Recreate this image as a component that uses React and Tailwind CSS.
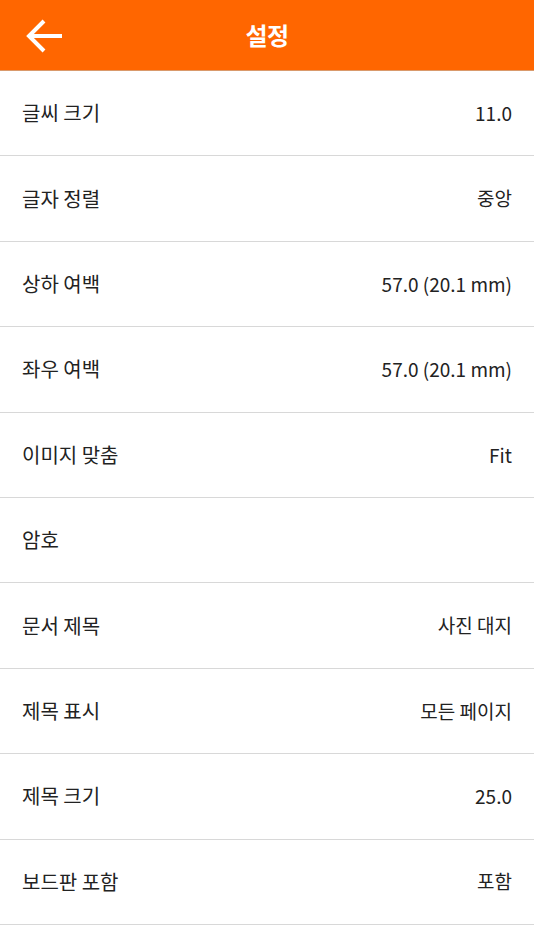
import { useState } from "react";

const settings = [
  { label: "글씨 크기", value: "11.0" },
  { label: "글자 정렬", value: "중앙" },
  { label: "상하 여백", value: "57.0 (20.1 mm)" },
  { label: "좌우 여백", value: "57.0 (20.1 mm)" },
  { label: "이미지 맞춤", value: "Fit" },
  { label: "암호", value: "" },
  { label: "문서 제목", value: "사진 대지" },
  { label: "제목 표시", value: "모든 페이지" },
  { label: "제목 크기", value: "25.0" },
  { label: "보드판 포함", value: "포함" },
];

const App = () => {
  const [items] = useState(settings);

  return (
    <div
      className="w-[534px] h-[950px] bg-white overflow-hidden"
      style={{ fontFamily: '"Noto Sans CJK KR", "Noto Sans", sans-serif' }}
    >
      {/* Header */}
      <div className="relative h-[71px] bg-[#ff6600] border-b border-[#d99a6c] flex items-center justify-center">
        <button className="absolute left-[25px] top-[18px] w-[38px] h-[36px] flex items-center justify-center">
          <svg width="38" height="36" viewBox="0 0 38 36" fill="none">
            <path
              d="M37 18H5M19 3L4 18l15 15"
              stroke="white"
              strokeWidth="4"
              strokeLinecap="butt"
              strokeLinejoin="miter"
            />
          </svg>
        </button>
        <h1 className="text-white text-[24px] font-bold tracking-tight">설정</h1>
      </div>

      {/* Settings List */}
      <div>
        {items.map((item, index) => (
          <div
            key={index}
            className="h-[85.4px] flex items-center justify-between px-[22px] border-b border-[#d8d8d8]"
          >
            <span className="text-[20px] text-[#222]">{item.label}</span>
            <span className="text-[19px] text-[#222]">{item.value}</span>
          </div>
        ))}
      </div>
    </div>
  );
};

export default App;
